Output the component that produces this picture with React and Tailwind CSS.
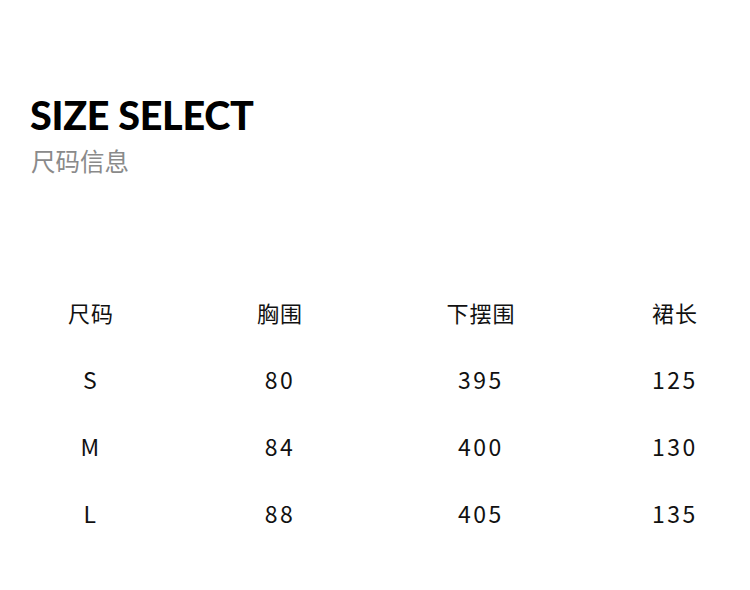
export default function App() {
  const rows = [
    ["S", "80", "395", "125"],
    ["M", "84", "400", "130"],
    ["L", "88", "405", "135"],
  ];
  const cols = ["ml-[31px]", "ml-[69px]", "ml-[81px]", "ml-[74px]"];
  const cjk = { fontFamily: '"Noto Sans CJK SC", "Noto Sans", sans-serif' };
  return (
    <div className="w-[750px] h-[590px] bg-white overflow-hidden relative">
      <div className="pt-[89px] pl-[30px]">
        <div
          className="text-[39.5px] leading-[52px] font-black text-black tracking-[-0.3px]"
          style={{ fontFamily: 'Lato, "Noto Sans", sans-serif' }}
        >
          SIZE SELECT
        </div>
        <div className="text-[24.5px] leading-[34px] text-[#8a8a8a] mt-[3px] pl-[1px]" style={cjk}>
          尺码信息
        </div>
      </div>
      <div className="mt-[117px] text-[#111]" style={cjk}>
        <div className="flex h-[34px] items-center text-[22px]">
          {["尺码", "胸围", "下摆围", "裙长"].map((t, i) => (
            <div key={t} className={`${cols[i]} w-[120px] text-center tracking-[1px]`}>
              {t}
            </div>
          ))}
        </div>
        {rows.map((r) => (
          <div key={r[0]} className="flex h-[34px] items-center text-[23px] mt-[33px]">
            {r.map((t, i) => (
              <div key={i} className={`${cols[i]} w-[120px] text-center tracking-[2.5px]`}>
                {t}
              </div>
            ))}
          </div>
        ))}
      </div>
    </div>
  );
}
